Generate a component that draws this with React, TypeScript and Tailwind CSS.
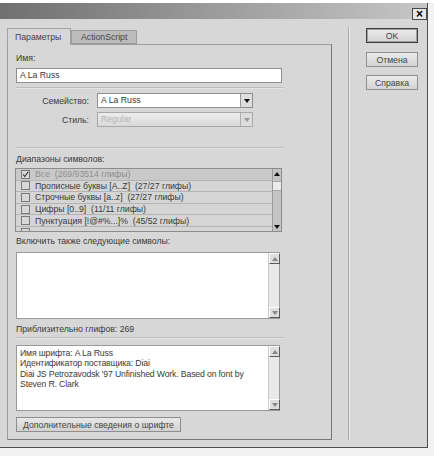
import React from "react";

function Arrow({ dir, color = "#222", size = 5 }: { dir: "up" | "down"; color?: string; size?: number }) {
  return (
    <svg width={size + 1} height={size - 1} viewBox="0 0 6 4">
      {dir === "up" ? <polygon points="0,4 6,4 3,0" fill={color} /> : <polygon points="0,0 6,0 3,4" fill={color} />}
    </svg>
  );
}

function LightScroll() {
  return (
    <div className="w-[11px] h-full flex flex-col bg-[#e9e9e9] border-l border-[#c8c8c8]">
      <div className="w-[11px] h-[11px] bg-[#dedede] border-t border-l border-white border-r border-b border-r-[#5a5a5a] border-b-[#5a5a5a] flex items-center justify-center">
        <Arrow dir="up" color="#888" />
      </div>
      <div className="flex-1" />
      <div className="w-[11px] h-[11px] bg-[#dedede] border-t border-l border-white border-r border-b border-r-[#5a5a5a] border-b-[#5a5a5a] flex items-center justify-center">
        <Arrow dir="down" color="#888" />
      </div>
    </div>
  );
}

function Row({ label, checked, first }: { label?: string; checked?: boolean; first?: boolean }) {
  return (
    <div
      className={
        "h-[11.6px] shrink-0 flex items-center border-b border-[#b4b4b4] " +
        (first ? "bg-[#c9c9c9] text-[#8e8e8e]" : "bg-[#d5d5d5] text-[#3a3a3a]")
      }
    >
      <div className="ml-[5px] w-[9px] h-[9px] border border-[#7a7a7a] bg-[#d8d8d8] flex items-center justify-center">
        {checked && (
          <svg width="9" height="9" viewBox="0 0 9 9">
            <path d="M1.5 4.5 L3.5 7 L8 1" stroke="#222" strokeWidth="1.3" fill="none" />
          </svg>
        )}
      </div>
      {label && <span className="ml-[5px] whitespace-pre leading-[10px]">{label}</span>}
    </div>
  );
}

export default function App() {
  return (
    <div className="w-[434px] h-[456px] bg-[#f2f2f2] overflow-hidden font-['Liberation_Sans',Arial,sans-serif] text-[8.7px] text-[#3a3a3a]">
      <div className="h-[3px] bg-white" />
      <div className="w-[428px] h-[445px] bg-[#d7d7d7] border-r border-b border-[#4e4e4e] flex flex-col">
        {/* Title bar */}
        <div className="h-[16px] shrink-0 bg-gradient-to-r from-[#707070] via-[#9b9b9b] to-[#c6c6c6] flex items-end justify-end">
          <div className="w-[15px] h-[12px] mb-[-1px] bg-[#e6e6e6] border border-[#4a4a4a] flex items-center justify-center text-[12px] leading-[12px] font-bold text-black">
            ×
          </div>
        </div>

        <div className="flex flex-1">
          {/* Left: tabs + panel */}
          <div className="pl-[7px] pt-[9px]">
            <div className="flex items-end h-[16px]">
              <div className="relative z-10 w-[64px] h-[17px] -mb-[1px] bg-[#d7d7d7] border-t border-l border-r border-[#a2a2a2] pl-[7px] pt-[3px] leading-[10px] text-[#444]">
                Параметры
              </div>
              <div className="w-[66px] h-[14px] bg-[#bcbcbc] border border-[#9c9c9c] pl-[9px] pt-[1px] leading-[10px] text-[#444]">
                ActionScript
              </div>
            </div>
            <div className="w-[325px] h-[396px] border border-[#9c9c9c] border-r-[#777] border-b-[#777] pl-[8px] flex flex-col">
              <div className="mt-[8px] h-[10px] leading-[10px]">Имя:</div>
              <div className="mt-[5px] w-[266px] h-[15px] bg-white border border-[#8e8e8e] pl-[3px] leading-[13px]">
                A La Russ
              </div>
              <div className="mt-[4px] w-[268px] h-[2px] border-t border-[#bdbdbd] border-b border-b-[#e4e4e4]" />
              {/* Семейство */}
              <div className="mt-[4px] flex items-center h-[15px]">
                <div className="w-[73px] text-right leading-[10px]">Семейство:</div>
                <div className="ml-[8px] w-[156px] h-[15px] bg-white border border-[#8e8e8e] flex">
                  <div className="flex-1 pl-[3px] leading-[13px]">A La Russ</div>
                  <div className="w-[12px] h-full bg-[#dedede] border-l border-[#9a9a9a] flex items-center justify-center">
                    <Arrow dir="down" color="#111" />
                  </div>
                </div>
              </div>
              {/* Стиль */}
              <div className="mt-[4px] flex items-center h-[15px]">
                <div className="w-[73px] text-right leading-[10px]">Стиль:</div>
                <div className="ml-[8px] w-[156px] h-[15px] bg-gradient-to-b from-[#ededed] to-[#d9d9d9] border border-[#a8a8a8] flex">
                  <div className="flex-1 pl-[3px] leading-[13px] text-[#b4b4b4]">Regular</div>
                  <div className="w-[12px] h-full bg-[#dcdcdc] border-l border-[#b0b0b0] flex items-center justify-center">
                    <Arrow dir="down" color="#999" />
                  </div>
                </div>
              </div>
              <div className="mt-[20px] w-[268px] h-[2px] border-t border-[#bdbdbd] border-b border-b-[#e4e4e4]" />
              <div className="mt-[5px] h-[10px] leading-[10px]">Диапазоны символов:</div>
              {/* List */}
              <div className="mt-[4px] -ml-[1px] w-[267px] h-[64px] border border-[#8c8c8c] flex">
                <div className="flex-1 flex flex-col overflow-hidden">
                  <Row first checked label="Все  (269/93514 глифы)" />
                  <Row label="Прописные буквы [A..Z]  (27/27 глифы)" />
                  <Row label="Строчные буквы [a..z]  (27/27 глифы)" />
                  <Row label="Цифры [0..9]  (11/11 глифы)" />
                  <Row label="Пунктуация [!@#%...]%  (45/52 глифы)" />
                  <Row />
                </div>
                <div className="w-[9px] bg-[#c4c4c4] border-l border-[#9a9a9a] flex flex-col">
                  <div className="h-[9px] flex items-center justify-center">
                    <Arrow dir="up" color="#111" />
                  </div>
                  <div className="mt-[3px] h-[10px] bg-[#ececec] border-y border-[#a8a8a8]" />
                  <div className="flex-1" />
                  <div className="h-[9px] flex items-center justify-center">
                    <Arrow dir="down" color="#111" />
                  </div>
                </div>
              </div>
              <div className="mt-[4px] h-[10px] leading-[10px]">Включить также следующие символы:</div>
              <div className="mt-[6px] w-[264px] h-[67px] bg-white border border-[#9a9a9a] flex">
                <div className="flex-1" />
                <LightScroll />
              </div>
              <div className="mt-[5px] h-[10px] leading-[10px]">Приблизительно глифов: 269</div>
              <div className="mt-[3px] w-[268px] h-[2px] border-t border-[#bdbdbd] border-b border-b-[#e4e4e4]" />
              <div className="mt-[6px] w-[264px] h-[66px] bg-white border border-[#9a9a9a] flex">
                <div className="flex-1 pl-[3px] pt-[2px] leading-[10.3px] tracking-[-0.15px]">
                  <div>Имя шрифта: A La Russ</div>
                  <div>Идентификатор поставщика: Diai</div>
                  <div className="whitespace-nowrap">Diai JS Petrozavodsk '97 Unfinished Work. Based on font by</div>
                  <div>Steven R. Clark</div>
                </div>
                <LightScroll />
              </div>
              <div className="mt-[6px] w-[165px] h-[15px] bg-gradient-to-b from-[#e8e8e8] to-[#d2d2d2] border border-[#8e8e8e] flex items-center justify-center leading-[10px] text-[#444]">
                Дополнительные сведения о шрифте
              </div>
            </div>
          </div>

          {/* Separator */}
          <div className="ml-[16px] mt-[8px] w-[2px] h-[413px] border-l border-[#a9a9a9] border-r border-r-[#ececec]" />

          {/* Buttons */}
          <div className="ml-[16px] mt-[9px] flex flex-col">
            <div className="w-[52px] h-[15px] bg-gradient-to-b from-[#ebebeb] to-[#d4d4d4] border border-[#3e3e3e] shadow-[inset_0_0_0_1px_#a0a0a0] flex items-center justify-center leading-[10px] text-[#444]">
              OK
            </div>
            <div className="mt-[9px] w-[52px] h-[15px] bg-gradient-to-b from-[#ebebeb] to-[#d4d4d4] border border-[#8e8e8e] flex items-center justify-center leading-[10px] text-[#444]">
              Отмена
            </div>
            <div className="mt-[8px] w-[52px] h-[15px] bg-gradient-to-b from-[#ebebeb] to-[#d4d4d4] border border-[#8e8e8e] flex items-center justify-center leading-[10px] text-[#444]">
              Справка
            </div>
          </div>
        </div>
      </div>
    </div>
  );
}
